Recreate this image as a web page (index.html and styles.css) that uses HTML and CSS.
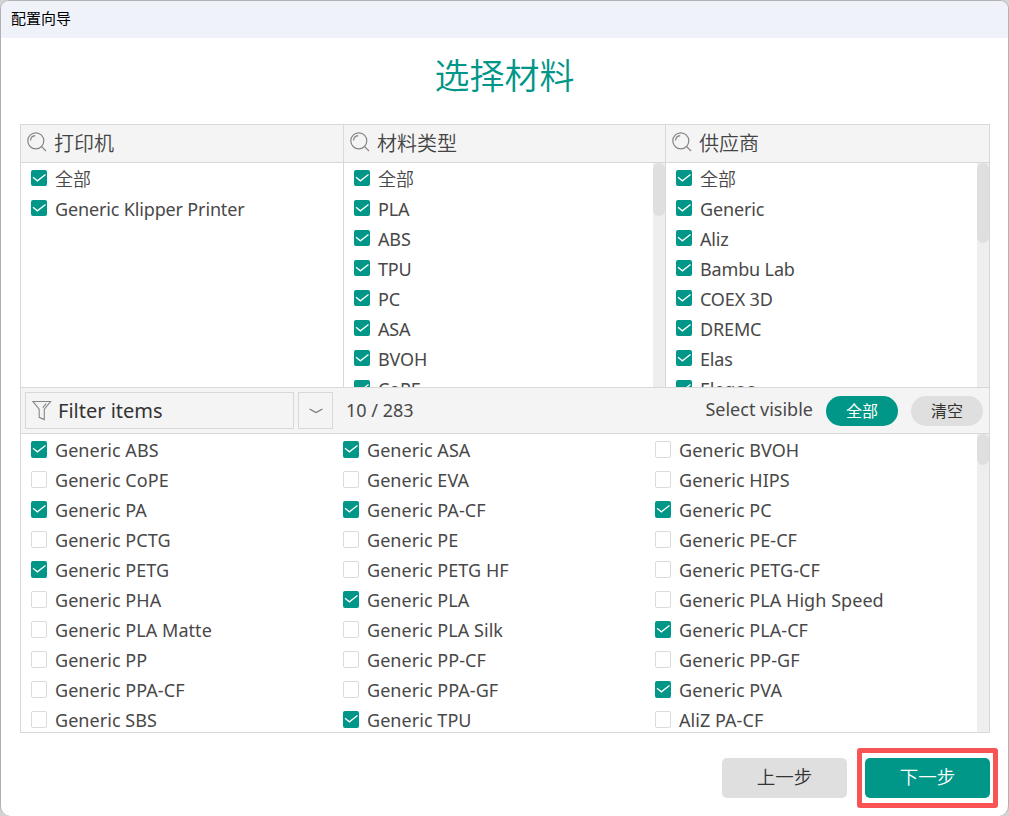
FILE: index.html
```html
<!DOCTYPE html>
<html lang="zh-CN">
<head>
<meta charset="utf-8">
<title>配置向导</title>
<link rel="stylesheet" href="styles.css">
</head>
<body>
<svg class="defs" width="0" height="0">
  <symbol id="check" viewBox="0 0 16 16"><path d="M2 7.3 6.4 10.8 14.5 4.4" fill="none" stroke="#fff" stroke-width="1.3"/></symbol>
  <symbol id="search" viewBox="0 0 20 20"><g fill="none" stroke="#858585" stroke-width="1.2"><circle cx="8.8" cy="8.8" r="8"/><path d="M14.4 14.4 19 19M3.6 8.6C3.7 5.8 5.6 3.8 8.2 3.6"/></g></symbol>
</svg>
<div class="window">
  <header class="titlebar">配置向导</header>
  <h1 class="title">选择材料</h1>
  <main class="panel">
    <div class="filters">
      <section class="column">
        <div class="head"><svg class="search"><use href="#search"/></svg>打印机</div>
        <div class="list">
          <label class="item cjk"><i class="box on"><svg><use href="#check"/></svg></i>全部</label>
          <label class="item"><i class="box on"><svg><use href="#check"/></svg></i><span>Generic Klipper Printer</span></label>
        </div>
      </section>
      <section class="column">
        <div class="head"><svg class="search"><use href="#search"/></svg>材料类型</div>
        <div class="list">
          <label class="item cjk"><i class="box on"><svg><use href="#check"/></svg></i>全部</label>
          <label class="item"><i class="box on"><svg><use href="#check"/></svg></i><span>PLA</span></label>
          <label class="item"><i class="box on"><svg><use href="#check"/></svg></i><span>ABS</span></label>
          <label class="item"><i class="box on"><svg><use href="#check"/></svg></i><span>TPU</span></label>
          <label class="item"><i class="box on"><svg><use href="#check"/></svg></i><span>PC</span></label>
          <label class="item"><i class="box on"><svg><use href="#check"/></svg></i><span>ASA</span></label>
          <label class="item"><i class="box on"><svg><use href="#check"/></svg></i><span>BVOH</span></label>
          <label class="item"><i class="box on"><svg><use href="#check"/></svg></i><span>CoPE</span></label>
          <div class="track"><div class="thumb types"></div></div>
        </div>
      </section>
      <section class="column">
        <div class="head"><svg class="search"><use href="#search"/></svg>供应商</div>
        <div class="list">
          <label class="item cjk"><i class="box on"><svg><use href="#check"/></svg></i>全部</label>
          <label class="item"><i class="box on"><svg><use href="#check"/></svg></i><span>Generic</span></label>
          <label class="item"><i class="box on"><svg><use href="#check"/></svg></i><span>Aliz</span></label>
          <label class="item"><i class="box on"><svg><use href="#check"/></svg></i><span>Bambu Lab</span></label>
          <label class="item"><i class="box on"><svg><use href="#check"/></svg></i><span>COEX 3D</span></label>
          <label class="item"><i class="box on"><svg><use href="#check"/></svg></i><span>DREMC</span></label>
          <label class="item"><i class="box on"><svg><use href="#check"/></svg></i><span>Elas</span></label>
          <label class="item"><i class="box on"><svg><use href="#check"/></svg></i><span>Elegoo</span></label>
          <div class="track"><div class="thumb vendors"></div></div>
        </div>
      </section>
    </div>
    <div class="toolbar">
      <div class="search-field"><svg class="funnel" viewBox="0 0 20 21"><g fill="none" stroke="#858585" stroke-width="1.1"><path d="M1 1.5H18.6L12.3 9.2V19.6L7.2 17.3V9.2Z"/><path d="M14.2 3.6 10.8 7.6"/></g></svg>Filter items</div>
      <div class="dropdown"><svg class="chevron" viewBox="0 0 14 6"><path d="M.5 1 7 4.6 13.5 1" fill="none" stroke="#777" stroke-width="1.1"/></svg></div>
      <span class="count">10 / 283</span>
      <span class="visible">Select visible</span>
      <button class="pill primary">全部</button>
      <button class="pill">清空</button>
    </div>
    <div class="list materials">
      <label class="item"><i class="box on"><svg><use href="#check"/></svg></i>Generic ABS</label>
      <label class="item"><i class="box on"><svg><use href="#check"/></svg></i>Generic ASA</label>
      <label class="item"><i class="box"></i>Generic BVOH</label>
      <label class="item"><i class="box"></i>Generic CoPE</label>
      <label class="item"><i class="box"></i>Generic EVA</label>
      <label class="item"><i class="box"></i>Generic HIPS</label>
      <label class="item"><i class="box on"><svg><use href="#check"/></svg></i>Generic PA</label>
      <label class="item"><i class="box on"><svg><use href="#check"/></svg></i>Generic PA-CF</label>
      <label class="item"><i class="box on"><svg><use href="#check"/></svg></i>Generic PC</label>
      <label class="item"><i class="box"></i>Generic PCTG</label>
      <label class="item"><i class="box"></i>Generic PE</label>
      <label class="item"><i class="box"></i>Generic PE-CF</label>
      <label class="item"><i class="box on"><svg><use href="#check"/></svg></i>Generic PETG</label>
      <label class="item"><i class="box"></i>Generic PETG HF</label>
      <label class="item"><i class="box"></i>Generic PETG-CF</label>
      <label class="item"><i class="box"></i>Generic PHA</label>
      <label class="item"><i class="box on"><svg><use href="#check"/></svg></i>Generic PLA</label>
      <label class="item"><i class="box"></i>Generic PLA High Speed</label>
      <label class="item"><i class="box"></i>Generic PLA Matte</label>
      <label class="item"><i class="box"></i>Generic PLA Silk</label>
      <label class="item"><i class="box on"><svg><use href="#check"/></svg></i>Generic PLA-CF</label>
      <label class="item"><i class="box"></i>Generic PP</label>
      <label class="item"><i class="box"></i>Generic PP-CF</label>
      <label class="item"><i class="box"></i>Generic PP-GF</label>
      <label class="item"><i class="box"></i>Generic PPA-CF</label>
      <label class="item"><i class="box"></i>Generic PPA-GF</label>
      <label class="item"><i class="box on"><svg><use href="#check"/></svg></i>Generic PVA</label>
      <label class="item"><i class="box"></i>Generic SBS</label>
      <label class="item"><i class="box on"><svg><use href="#check"/></svg></i>Generic TPU</label>
      <label class="item"><i class="box"></i>AliZ PA-CF</label>
      <div class="track"><div class="thumb all"></div></div>
    </div>
  </main>
  <footer class="footer">
    <button class="nav">上一步</button>
    <div class="highlight"><button class="nav primary">下一步</button></div>
  </footer>
</div>
</body>
</html>
```
FILE: styles.css
```css
* { box-sizing: border-box; }
body {
  margin: 0;
  height: 816px;
  overflow: hidden;
  background: #d4d4d4;
  color: #484848;
  font-family: "Noto Sans", "Noto Sans CJK SC", sans-serif;
}
.defs { position: absolute; }
svg { display: block; flex: none; }
button { font: inherit; border: 0; padding: 0; margin: 0; }
.window {
  display: flex;
  flex-direction: column;
  width: 1009px;
  height: 816px;
  border: 1px solid #b0b0b2;
  border-bottom: 0;
  border-radius: 9px 9px 10px 10px;
  background: #fff;
  overflow: hidden;
}
.titlebar {
  height: 37px;
  padding-left: 10px;
  background: #eff3f9;
  color: #000;
  font: 15px/33px "Noto Sans CJK SC", sans-serif;
}
.title {
  margin: 0;
  height: 86px;
  padding-top: 10px;
  text-align: center;
  color: #009688;
  font: 350 35px/52px "Noto Sans CJK SC", sans-serif;
}
.panel {
  width: 970px;
  height: 609px;
  margin-left: 19px;
  border: 1px solid #d8d8d8;
}
.filters { display: grid; grid-template-columns: 322px 322px 324px; height: 262px; }
.column { border-left: 1px solid #d8d8d8; }
.column:first-child { border-left: 0; }
.head {
  display: flex;
  align-items: center;
  gap: 7px;
  height: 38px;
  padding-left: 6px;
  border-bottom: 1px solid #d8d8d8;
  background: #f4f4f4;
  color: #444;
  font: 350 20px/34px "Noto Sans CJK SC", sans-serif;
  padding-bottom: 2px;
}
.search { width: 20px; height: 20px; margin-top: -1px; }
.list { position: relative; height: 224px; overflow: hidden; }
.item {
  display: flex;
  align-items: center;
  gap: 8px;
  height: 30px;
  padding-left: 10px;
  font-size: 18px;
  line-height: 30px;
  letter-spacing: -.15px;
  white-space: nowrap;
}
.item span { padding-top: 2px; }
.cjk { font-family: "Noto Sans CJK SC", sans-serif; font-weight: 350; letter-spacing: 0; }
.box {
  flex: none;
  width: 16px;
  height: 16px;
  border: 1px solid #dbdbdb;
  border-radius: 2px;
}
.box.on { border: 0; background: #009688; }
.box svg { width: 16px; height: 16px; }
.list .box { margin-bottom: 1px; }
.track {
  position: absolute;
  top: 0;
  right: 0;
  width: 12px;
  height: 100%;
  background: #eee;
}
.thumb { border-radius: 6px; background: #dfdfdf; }
.types { height: 53px; }
.vendors { height: 80px; }
.all { height: 31px; }
.toolbar {
  display: flex;
  align-items: center;
  height: 47px;
  padding: 0 6px 0 4px;
  border: solid #d8d8d8;
  border-width: 1px 0;
  background: #f4f4f4;
}
.search-field {
  display: flex;
  align-items: center;
  gap: 6px;
  width: 269px;
  height: 37px;
  padding-left: 6px;
  border: 1px solid #d8d8d8;
  color: #333;
  font-size: 20px;
}
.funnel { width: 20px; height: 21px; }
.dropdown {
  display: grid;
  place-items: center;
  width: 35px;
  height: 37px;
  margin-left: 4px;
  border: 1px solid #d8d8d8;
}
.chevron { width: 14px; height: 6px; }
.count { margin-left: 13px; padding-bottom: 2px; font-size: 18px; }
.visible { margin-left: auto; margin-right: 13px; padding-bottom: 4px; font-size: 18px; }
.pill {
  width: 72px;
  height: 30px;
  padding-bottom: 2px;
  border-radius: 15px;
  background: #dfdfdf;
  color: #333;
  font: 16px/28px "Noto Sans CJK SC", sans-serif;
}
.pill + .pill { margin-left: 13px; }
.materials {
  display: grid;
  grid-template-columns: repeat(3, 312px);
  grid-auto-rows: 30px;
  height: 298px;
  padding-top: 1px;
}
.materials .item { letter-spacing: .05px; }
.materials .box { height: 17px; margin-bottom: 2px; }
.footer {
  display: flex;
  justify-content: flex-end;
  align-items: center;
  gap: 10px;
  height: 60px;
  margin-top: 15px;
  padding-right: 10px;
}
.nav {
  width: 125px;
  height: 40px;
  padding-bottom: 3px;
  border-radius: 5px;
  background: #dfdfdf;
  color: #333;
  font: 350 18.5px/37px "Noto Sans CJK SC", sans-serif;
}
.primary { background: #009688; color: #fff; }
.highlight {
  display: grid;
  place-items: center;
  width: 141px;
  height: 60px;
  border: 5px solid #f85454;
  border-radius: 3px;
}
```
